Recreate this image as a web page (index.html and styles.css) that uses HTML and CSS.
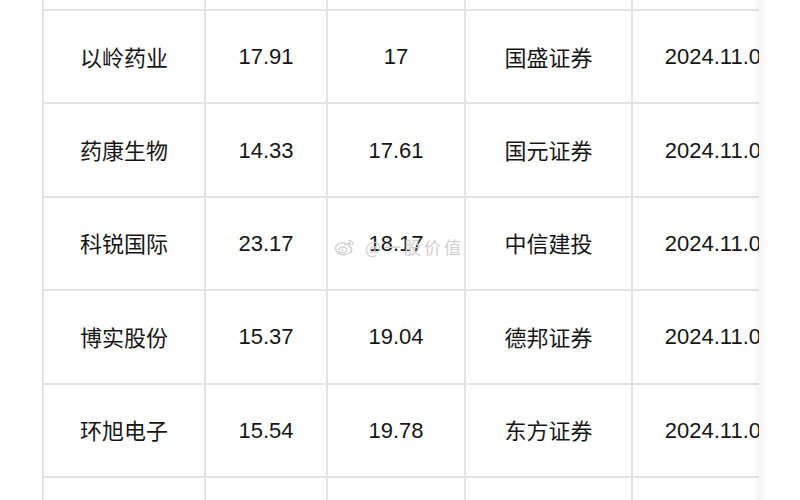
FILE: index.html
```html
<!DOCTYPE html>
<html lang="zh-CN">
<head>
<meta charset="utf-8">
<title>研报目标价</title>
<link rel="stylesheet" href="styles.css">
</head>
<body>
<div class="page">
  <div class="clip">
    <div class="table">
      <div class="row stub">
        <div class="cell"></div><div class="cell"></div><div class="cell"></div><div class="cell"></div><div class="cell"></div>
      </div>
      <div class="row">
        <div class="cell zh">以岭药业</div><div class="cell">17.91</div><div class="cell">17</div><div class="cell zh">国盛证券</div><div class="cell">2024.11.07</div>
      </div>
      <div class="row">
        <div class="cell zh">药康生物</div><div class="cell">14.33</div><div class="cell">17.61</div><div class="cell zh">国元证券</div><div class="cell">2024.11.07</div>
      </div>
      <div class="row">
        <div class="cell zh">科锐国际</div><div class="cell">23.17</div><div class="cell">18.17</div><div class="cell zh">中信建投</div><div class="cell">2024.11.07</div>
      </div>
      <div class="row">
        <div class="cell zh">博实股份</div><div class="cell">15.37</div><div class="cell">19.04</div><div class="cell zh">德邦证券</div><div class="cell">2024.11.07</div>
      </div>
      <div class="row">
        <div class="cell zh">环旭电子</div><div class="cell">15.54</div><div class="cell">19.78</div><div class="cell zh">东方证券</div><div class="cell">2024.11.07</div>
      </div>
      <div class="row">
        <div class="cell"></div><div class="cell"></div><div class="cell"></div><div class="cell"></div><div class="cell"></div>
      </div>
    </div>
  </div>
  <div class="shadow"></div>
  <div class="watermark">
    <svg class="wb" width="21" height="17" viewBox="0 0 18 15" aria-hidden="true">
      <path d="M7.5 3.2C4 3.2 1 5.6 1 8.6c0 3 3.2 5.2 7.2 5.2 4.2 0 7.3-2.3 7.3-4.6 0-1.6-1.4-2.2-2.3-2.4.6-1.3.2-2.6-1.4-2.4-1 .1-1.8.6-2.2.7.5-1.3.1-2.2-.9-2.1-.5 0-.9.1-1.2.2z" fill="none" stroke="#d0d0d0" stroke-width="1.3"/>
      <ellipse cx="7.4" cy="9.6" rx="3.3" ry="2.4" fill="none" stroke="#d0d0d0" stroke-width="1.1"/>
      <circle cx="6.9" cy="9.8" r="1" fill="#d0d0d0"/>
      <path d="M12.5 1.3c1.8 0 3.5 1.4 3.7 3.4M12.6 3c.9 0 1.7.7 1.8 1.6" fill="none" stroke="#d0d0d0" stroke-width="1.1" stroke-linecap="round"/>
    </svg>
    <span class="wm-text">@一股价值</span>
  </div>
</div>
</body>
</html>
```

FILE: styles.css
```css
html, body {
  margin: 0;
  padding: 0;
  background: #ffffff;
}

.page {
  position: relative;
  width: 800px;
  height: 500px;
  overflow: hidden;
  background: #ffffff;
}

.clip {
  width: 759px;
  height: 500px;
  overflow: hidden;
}

.table {
  margin-left: 42px;
  width: 800px;
  border-left: 2px solid #e3e3e3;
  font-family: "Liberation Sans", "Noto Sans CJK SC", sans-serif;
  font-size: 22px;
  line-height: 22px;
  color: #161616;
}

.row {
  display: grid;
  grid-template-columns: 162px 122px 138px 167px 174px;
  height: 93.4px;
}

.row.stub {
  height: 11px;
}

.cell {
  box-sizing: border-box;
  border-right: 2px solid #e3e3e3;
  border-bottom: 2px solid #e3e3e3;
  display: flex;
  align-items: center;
  justify-content: center;
  white-space: nowrap;
  padding-top: 1px;
}

.cell.zh {
  font-family: "Noto Sans CJK SC", sans-serif;
  padding-top: 0;
  padding-bottom: 2px;
}

.shadow {
  position: absolute;
  left: 752px;
  top: 0;
  width: 16px;
  height: 500px;
  background: linear-gradient(to right, rgba(0,0,0,0) 0%, rgba(0,0,0,0.035) 40%, rgba(0,0,0,0.03) 60%, rgba(0,0,0,0) 100%);
}

.watermark {
  position: absolute;
  left: 334px;
  top: 237px;
  display: flex;
  align-items: center;
  gap: 10px;
  color: #d0d0d0;
  font-family: "Noto Sans CJK SC", sans-serif;
  font-size: 17px;
  line-height: 20px;
}

.wb {
  display: block;
}

.wm-text {
  letter-spacing: 3px;
}
```
